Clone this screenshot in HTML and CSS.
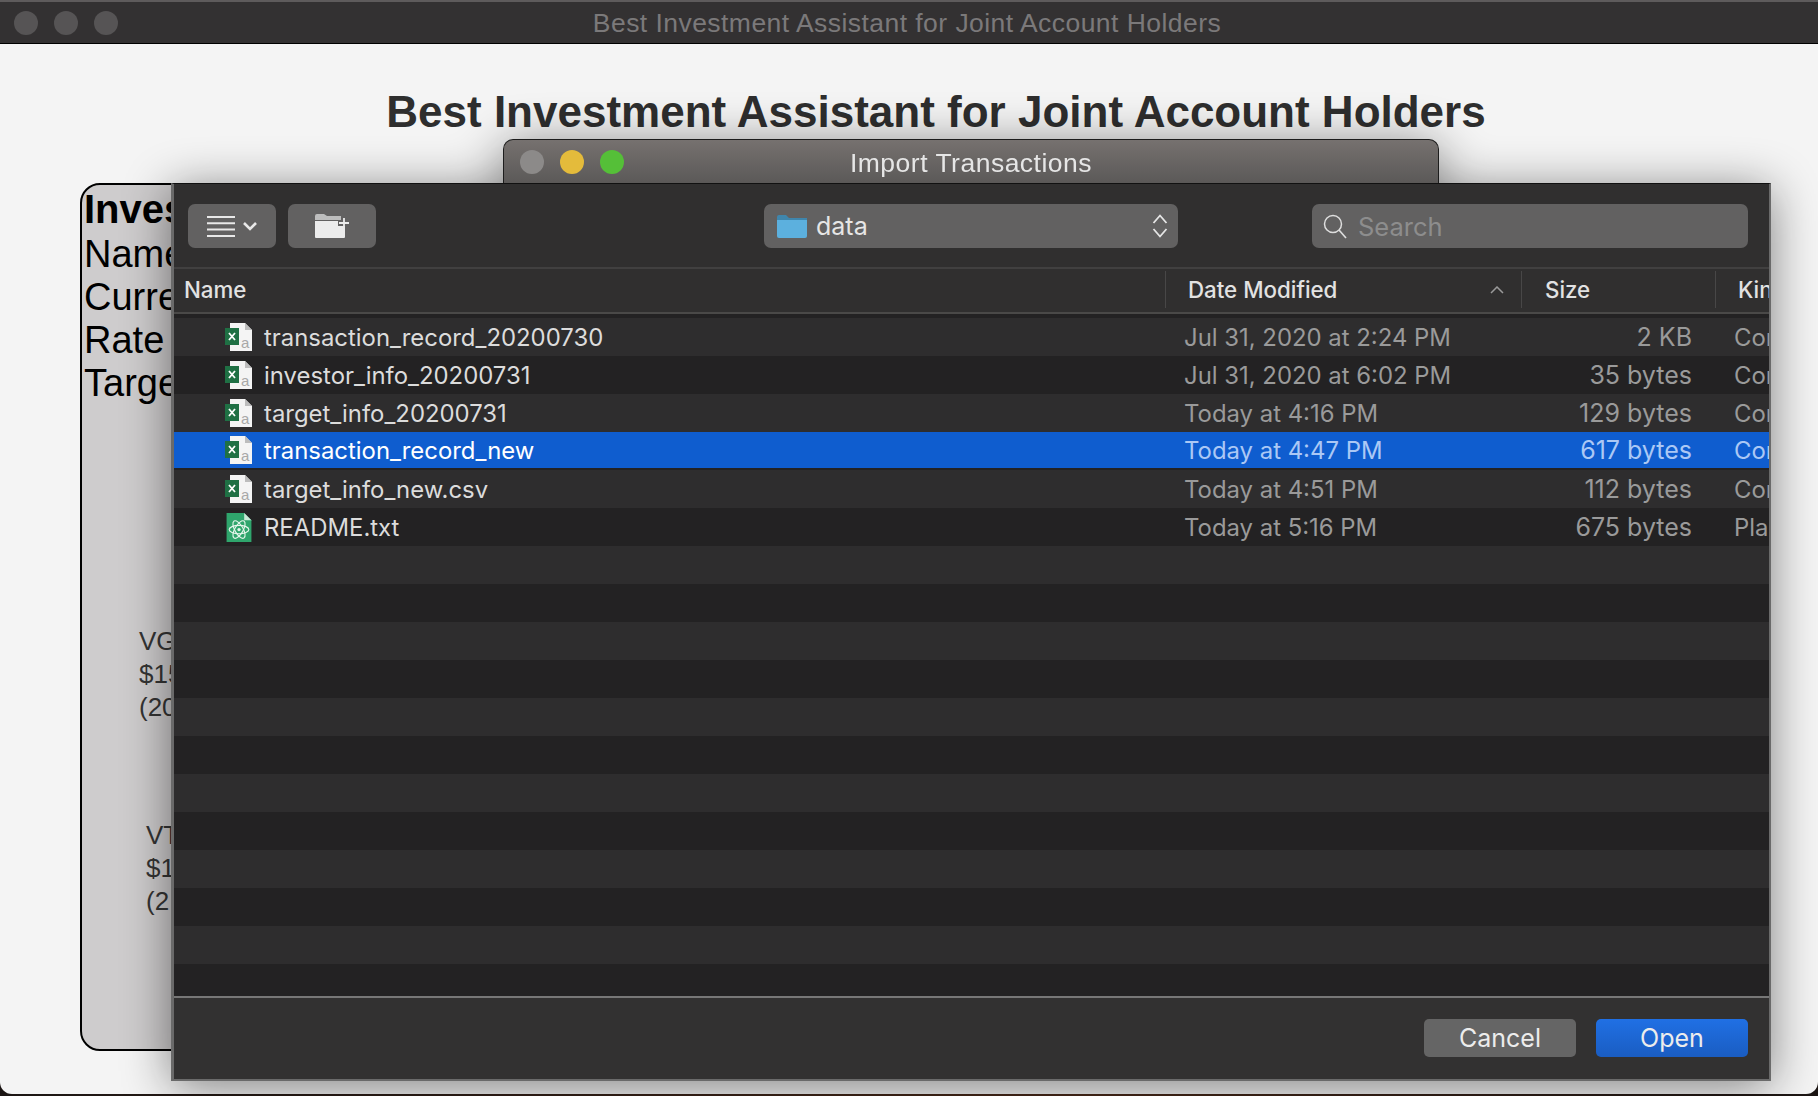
FILE: index.html
```html
<!DOCTYPE html>
<html lang="en">
<head>
<meta charset="utf-8">
<title>Best Investment Assistant for Joint Account Holders</title>
<link rel="stylesheet" href="styles.css">
</head>
<body>
<svg class="defs" width="0" height="0" aria-hidden="true">
  <symbol id="xls" viewBox="0 0 28 29">
    <path d="M5 0H20L27 7V28H5Z" fill="#f4f4f4"/>
    <path d="M20 0V7H27Z" fill="#bdbdbd"/>
    <rect x="0" y="5" width="14" height="17" fill="#1f7044"/>
    <path d="M4 10L10 17M10 10L4 17" stroke="#fff" stroke-width="1.8" fill="none"/>
    <text x="16" y="25" class="icon-a">a</text>
  </symbol>
  <symbol id="atom" viewBox="0 0 24 28">
    <path d="M0 0H17L24 7V28H0Z" fill="#2fa56c"/>
    <path d="M17 0V7H24Z" fill="#c8e8d6"/>
    <g fill="none" stroke="#e6f6ec" stroke-width="1.1">
      <ellipse cx="12" cy="16" rx="9.5" ry="4"/>
      <ellipse cx="12" cy="16" rx="9.5" ry="4" transform="rotate(60 12 16)"/>
      <ellipse cx="12" cy="16" rx="9.5" ry="4" transform="rotate(120 12 16)"/>
    </g>
    <circle cx="12" cy="16" r="1.6" fill="#e6f6ec"/>
  </symbol>
</svg>

<div class="window">
  <header class="titlebar">
    <div class="lights">
      <span class="light light-off"></span>
      <span class="light light-off"></span>
      <span class="light light-off"></span>
    </div>
    <div class="titlebar-text">Best Investment Assistant for Joint Account Holders</div>
  </header>
  <main class="content">
    <h1 class="app-title">Best Investment Assistant for Joint Account Holders</h1>
    <section class="card">
      <div class="card-head">Inves</div>
      <div class="card-line">Name</div>
      <div class="card-line">Curre</div>
      <div class="card-line">Rate</div>
      <div class="card-line">Targe</div>
      <div class="holding holding-a">VG<br>$15<br>(20</div>
      <div class="holding holding-b">VT<br>$1<br>(2</div>
    </section>
  </main>
</div>
<div class="desktop-strip"></div>

<div class="sheet">
  <div class="sheet-tab">
    <div class="lights lights-tab">
      <span class="light light-grey"></span>
      <span class="light light-yellow"></span>
      <span class="light light-green"></span>
    </div>
    <div class="sheet-title">Import Transactions</div>
  </div>
  <div class="dialog">
    <div class="toolbar">
      <div class="btn-group">
        <button class="tool-btn" aria-label="View">
          <svg width="50" height="21" viewBox="0 0 50 21"><g stroke="#e8e8e8" stroke-width="2"><path d="M0 1H28M0 7.3H28M0 13.6H28M0 20H28"/></g><path d="M37 7L43 13L49 7" fill="none" stroke="#e8e8e8" stroke-width="2.6"/></svg>
        </button>
        <button class="tool-btn" aria-label="New folder">
          <svg width="34" height="24" viewBox="0 0 34 24"><path d="M0 6V2Q0 0 2 0H9L12 2H26V6Z" fill="#bdbdbd"/><path d="M0 7H23V12H30V23Q30 24 29 24H1Q0 24 0 23Z" fill="#ececec"/><path d="M29 4V14M24 9H34" stroke="#ececec" stroke-width="1.8"/></svg>
        </button>
      </div>
      <div class="path-popup">
        <svg class="folder-icon" width="30" height="23" viewBox="0 0 30 23"><path d="M0 4V2Q0 0 2 0H9L12 3H30V6H0Z" fill="#3f86ad"/><path d="M0 5H30V21Q30 23 28 23H2Q0 23 0 21Z" fill="#5cb0de"/></svg>
        <span class="path-label">data</span>
        <svg class="stepper" width="16" height="26" viewBox="0 0 16 26"><path d="M1.500 10L8 2.500L14.500 10M1.500 16L8 23.500L14.500 16" fill="none" stroke="#e6e6e6" stroke-width="1.8"/></svg>
      </div>
      <div class="search">
        <svg width="26" height="26" viewBox="0 0 26 26"><circle cx="11" cy="11" r="8.5" fill="none" stroke="#dedede" stroke-width="1.5"/><path d="M17 17L24 25" stroke="#dedede" stroke-width="1.6"/></svg>
        <span class="search-text">Search</span>
      </div>
    </div>

    <div class="list-header">
      <div class="col-name">Name</div>
      <div class="col-date">Date Modified
        <svg class="sort-caret" width="14" height="8" viewBox="0 0 14 8"><path d="M1 7L7 1L13 7" fill="none" stroke="#9a9a9a" stroke-width="1.5"/></svg>
      </div>
      <div class="col-size">Size</div>
      <div class="col-kind">Kin</div>
    </div>

    <div class="rows">
      <div class="row"><svg class="file-icon"><use href="#xls"/></svg><span class="cell-name">transaction_record_20200730</span><span class="cell-date">Jul 31, 2020 at 2:24 PM</span><span class="cell-size">2 KB</span><span class="cell-kind">Cor</span></div>
      <div class="row"><svg class="file-icon"><use href="#xls"/></svg><span class="cell-name">investor_info_20200731</span><span class="cell-date">Jul 31, 2020 at 6:02 PM</span><span class="cell-size">35 bytes</span><span class="cell-kind">Cor</span></div>
      <div class="row"><svg class="file-icon"><use href="#xls"/></svg><span class="cell-name">target_info_20200731</span><span class="cell-date">Today at 4:16 PM</span><span class="cell-size">129 bytes</span><span class="cell-kind">Cor</span></div>
      <div class="row row-selected"><svg class="file-icon"><use href="#xls"/></svg><span class="cell-name">transaction_record_new</span><span class="cell-date">Today at 4:47 PM</span><span class="cell-size">617 bytes</span><span class="cell-kind">Cor</span></div>
      <div class="row"><svg class="file-icon"><use href="#xls"/></svg><span class="cell-name">target_info_new.csv</span><span class="cell-date">Today at 4:51 PM</span><span class="cell-size">112 bytes</span><span class="cell-kind">Cor</span></div>
      <div class="row"><svg class="file-icon"><use href="#atom"/></svg><span class="cell-name">README.txt</span><span class="cell-date">Today at 5:16 PM</span><span class="cell-size">675 bytes</span><span class="cell-kind">Pla</span></div>
      <div class="row"></div><div class="row"></div><div class="row"></div><div class="row"></div>
      <div class="row"></div><div class="row"></div><div class="row"></div><div class="row"></div>
      <div class="row"></div><div class="row"></div><div class="row"></div>
      <div class="row"></div>
    </div>

    <div class="footer">
      <button class="action action-cancel">Cancel</button>
      <button class="action action-open">Open</button>
    </div>
  </div>
</div>
</body>
</html>
```

FILE: styles.css
```css
* { box-sizing: border-box; }

html, body {
  margin: 0;
  height: 100%;
  overflow: hidden;
  background: #1a1412;
}

body {
  position: relative;
  width: 1818px;
  height: 1096px;
  font-family: "Inter", "Liberation Sans", sans-serif;
}

.defs { position: absolute; }

.icon-a {
  font-family: "Liberation Sans", sans-serif;
  font-size: 15px;
  fill: #a8a8a8;
}

.window {
  height: 1094px;
  display: flex;
  flex-direction: column;
  background: #f4f4f4;
  border-radius: 0 0 12px 12px;
  overflow: hidden;
}

.desktop-strip {
  height: 2px;
  background: linear-gradient(90deg, #1c1614, #4a2a1a 60%, #1c1614);
}

.titlebar {
  flex: none;
  height: 44px;
  display: flex;
  align-items: center;
  position: relative;
  background: #333132;
  border-top: 2px solid #5e5b5c;
  border-bottom: 1px solid #000;
}

.lights {
  display: flex;
  gap: 16px;
  padding-left: 14px;
}

.light {
  width: 24px;
  height: 24px;
  border-radius: 50%;
}

.light-off { background: #565455; }
.light-grey { background: #8c8a89; }
.light-yellow { background: #e4bb3b; }
.light-green { background: #55bf38; }

.titlebar-text {
  position: absolute;
  left: 0;
  right: 4px;
  top: 4px;
  text-align: center;
  font-size: 26.5px;
  line-height: 34px;
  color: #7b797a;
  font-family: "Liberation Sans", sans-serif;
  letter-spacing: 0.45px;
}

.content {
  flex: 1;
  display: flex;
  flex-direction: column;
  padding-left: 80px;
}

.app-title {
  margin: 0;
  height: 139px;
  padding: 43px 26px 0 0;
  text-align: center;
  font-family: "Liberation Sans", sans-serif;
  font-size: 44px;
  line-height: 50px;
  font-weight: 700;
  color: #2e2e2e;
}

.card {
  width: 1500px;
  height: 868px;
  display: flex;
  flex-direction: column;
  background: #cecccd;
  border: 2.5px solid #000;
  border-radius: 20px;
  padding: 1px 0 0 2px;
  font-family: "Liberation Sans", sans-serif;
  color: #000;
}

.card-head {
  font-size: 40px;
  line-height: 47px;
  font-weight: 700;
}

.card-line {
  font-size: 38px;
  line-height: 43px;
}

.holding {
  font-size: 26px;
  line-height: 33px;
  color: #343434;
}

.holding-a { margin: 220px 0 0 55px; }
.holding-b { margin: 95px 0 0 62px; }

/* Sheet sits on top of the window */
.sheet {
  position: absolute;
  left: 171px;
  top: 139px;
  width: 1600px;
  filter: drop-shadow(0 6px 24px rgba(0, 0, 0, 0.48));
}

.sheet-tab {
  position: relative;
  margin-left: 332px;
  width: 936px;
  height: 44px;
  display: flex;
  align-items: center;
  background: linear-gradient(#76716f, #5b5958);
  border: 1px solid #1d1d1d;
  border-bottom: 0;
  border-radius: 10px 10px 0 0;
}

.lights-tab { padding-left: 16px; }

.sheet-title {
  position: absolute;
  left: 0;
  right: 0;
  top: 7px;
  text-align: center;
  font-size: 26.5px;
  line-height: 32px;
  color: #e6e6e6;
  font-family: "Liberation Sans", sans-serif;
  letter-spacing: 0.5px;
}

.dialog {
  height: 898px;
  display: flex;
  flex-direction: column;
  background: #302f2f;
  border: 2px solid #6a6a6a;
  border-left-width: 3px;
  border-top: 1px solid #111;
}

.toolbar {
  flex: none;
  height: 85px;
  display: flex;
  align-items: flex-start;
  padding: 20px 21px 0 14px;
  border-bottom: 2px solid #414040;
}

.btn-group {
  display: flex;
  gap: 12px;
  margin-right: 388px;
}

.tool-btn {
  width: 88px;
  height: 44px;
  padding: 0;
  display: flex;
  align-items: center;
  justify-content: center;
  border: 0;
  border-radius: 7px;
  background: #626161;
}

.path-popup {
  width: 414px;
  height: 44px;
  display: flex;
  align-items: center;
  padding: 0 10px 0 13px;
  border-radius: 7px;
  background: #626161;
  margin-right: 134px;
}

.folder-icon { flex: none; }

.path-label {
  flex: 1;
  margin-left: 9px;
  font-size: 25px;
  color: #e6e6e6;
}

.search {
  flex: 1;
  height: 44px;
  display: flex;
  align-items: center;
  gap: 10px;
  padding-left: 10px;
  border-radius: 7px;
  background: #626161;
}

.search-text {
  font-size: 25.5px;
  color: #8d8d8d;
}

.list-header {
  flex: none;
  height: 45px;
  display: grid;
  grid-template-columns: 991px 356px 194px 1fr;
  align-items: stretch;
  font-size: 22.3px;
  font-weight: 500;
  color: #e2e2e2;
  border-bottom: 2px solid #4a4948;
  overflow: hidden;
}

.col-name,
.col-date,
.col-size,
.col-kind {
  display: flex;
  align-items: center;
  margin: 2px 0 4px;
}

.col-name { padding-left: 10px; }

.col-date,
.col-size,
.col-kind {
  padding-left: 22px;
  border-left: 1px solid #484747;
}

.col-size { padding-left: 23px; }

.col-date { position: relative; }

.sort-caret {
  position: absolute;
  right: 17px;
  top: 15px;
}

.rows {
  flex: 1;
  min-height: 0;
  overflow: hidden;
  padding-top: 4px;
  background: #232223;
}

.row {
  height: 38px;
  display: grid;
  grid-template-columns: 51px 28px 11px 920px 316px 192px 42px 1fr;
  align-items: center;
  font-size: 23.9px;
  background: #2e2d2e;
  color: #dcdcdc;
}

.row:nth-child(even) { background: #232223; }

.file-icon { grid-column: 2; width: 28px; height: 29px; }
.cell-name { grid-column: 4; white-space: nowrap; }
.cell-date { grid-column: 5; color: #9a9a9a; white-space: nowrap; }
.cell-size { grid-column: 6; color: #9a9a9a; text-align: right; white-space: nowrap; font-size: 25px; }
.cell-kind { grid-column: 8; color: #9a9a9a; overflow: hidden; white-space: nowrap; }

.row.row-selected {
  height: 36px;
  margin-bottom: 2px;
  background: #0f5dcf;
}

.row-selected .cell-name { color: #fff; }
.row-selected .cell-date,
.row-selected .cell-size,
.row-selected .cell-kind { color: #abc8f5; }

.footer {
  flex: none;
  height: 83px;
  display: flex;
  justify-content: flex-end;
  align-items: flex-start;
  gap: 20px;
  padding: 21px 21px 0 0;
  background: #323131;
  border-top: 2px solid #777;
}

.action {
  width: 152px;
  height: 38px;
  border: 0;
  border-radius: 5px;
  font-family: "Inter", "Liberation Sans", sans-serif;
  font-size: 25px;
  color: #ececec;
}

.action-cancel { background: #656565; }
.action-open { background: linear-gradient(#2070e4, #1a5dc2); }
```
